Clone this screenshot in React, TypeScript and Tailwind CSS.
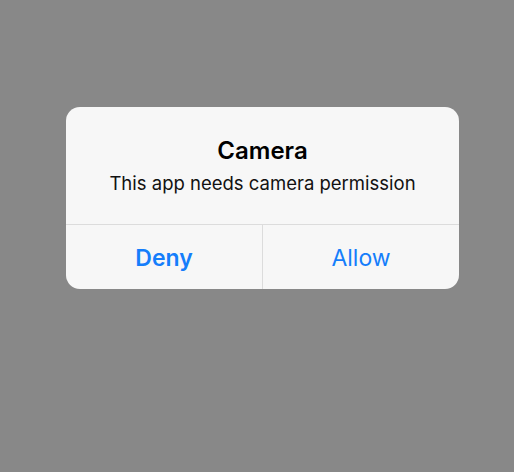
export default function App() {
    return (
        <div className="w-[514px] h-[472px] bg-[#888888] pt-[107px] pl-[66px]" style={{ fontFamily: 'Inter, "Noto Sans", sans-serif' }}>
            <div className="w-[393px] h-[182px] bg-[#f7f7f7] rounded-[14px] flex flex-col overflow-hidden">
                <div className="h-[117px] flex flex-col items-center pt-[29px]">
                    <p className="text-[24px] font-semibold text-black leading-[30px]">Camera</p>
                    <p className="text-[18.5px] text-[#111] leading-[24px] mt-[5px]">This app needs camera permission</p>
                </div>
                <div className="flex flex-1 border-t border-[#dcdcdc]">
                    <button className="flex-1 flex items-center justify-center pt-[2px] text-[23px] font-semibold text-[#157efb] border-r border-[#dcdcdc]">Deny</button>
                    <button className="flex-1 flex items-center justify-center pt-[2px] text-[23px] text-[#157efb]">Allow</button>
                </div>
            </div>
        </div>
    );
}
